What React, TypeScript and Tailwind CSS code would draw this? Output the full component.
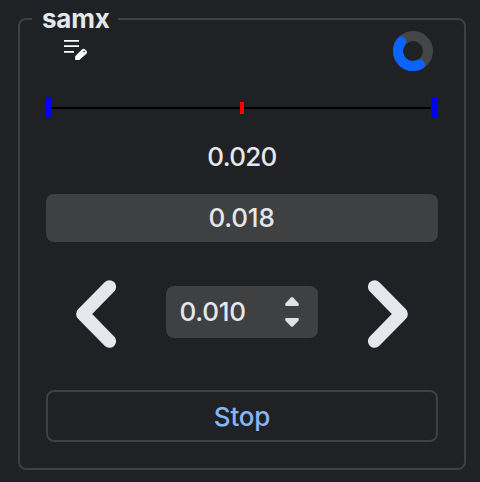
import React from "react";

function EditNoteIcon() {
  return (
    <svg width="26" height="26" viewBox="62 37 26 26" fill="#fff" aria-hidden="true">
      <path d="M64 40h15v1.700H64zM64 45.300h15v1.700H64zM64 51h10v1.700H64z" />
      <path
        fillRule="evenodd"
        d="M75.200 60v-3.700l6.700-6.700q1.600-1.500 3.200-.1l1.300 1.300q1.400 1.500 0 3L79.300 60zM84 50.500l-.9 1l1.100 1.100l1-.9z"
      />
    </svg>
  );
}

function Spinner() {
  return (
    <svg width="40" height="40" viewBox="-20 -20 40 40" fill="none" strokeWidth="10" aria-hidden="true">
      <circle r="15" stroke="#444546" />
      <path d="M-11.700 -9.400A15 15 0 0 0 7 13.270" stroke="#0a64ff" strokeLinecap="round" />
    </svg>
  );
}

function Chevron({ points }: { points: string }) {
  return (
    <svg width="40" height="68" viewBox="0 0 40 68" fill="none" stroke="#e4e7eb" strokeWidth="13.3" strokeLinecap="round" strokeLinejoin="round">
      <polyline points={points} />
    </svg>
  );
}

export default function App() {
  return (
    <main className="h-[482px] w-[480px] bg-[#202124] px-[18px] pt-[5px] pr-[14px] font-['Inter',sans-serif] text-[26px] leading-8 font-medium text-[#e4e7eb]">
      <fieldset className="h-[465px] rounded-lg border-2 border-[#3f4042] px-[26px]">
        <legend className="-ml-[14px] h-7 w-[86px] pl-[10px] text-[26px] leading-7 font-bold tracking-[-0.2px]">samx</legend>
        <div className="-mt-[2px] flex h-10 justify-between pr-[5px] pl-4">
          <div className="pt-[6px]"><EditNoteIcon /></div>
          <Spinner />
        </div>
        <div className="mt-[27px] flex h-5 items-center">
          <div className="h-5 w-[5px] bg-[#00f]" />
          <div className="h-[2px] w-[189px] bg-black" />
          <div className="h-3 w-1 bg-[#f00]" />
          <div className="h-[2px] flex-1 bg-black" />
          <div className="h-5 w-[7px] bg-[#00f]" />
        </div>
        <div className="mt-[23px] text-center tracking-[-0.7px]">0.020</div>
        <div className="mt-[21px] flex h-12 items-center justify-center rounded-lg bg-[#3f4042] pr-[1px] tracking-[-0.2px]">0.018</div>
        <div className="mt-[38px] flex h-[68px] items-center justify-between px-[30px]">
          <button><Chevron points="33.4,6.8 6.8,34 33.400,61.2" /></button>
          <div className="mb-[4px] flex h-[52px] w-[152px] items-center justify-between rounded-lg bg-[#3f4042] pr-[18px] pl-[14px]">
            <span className="-ml-[0.5px] tracking-[-0.3px]">0.010</span>
            <svg width="16" height="32" viewBox="0 0 16 32" fill="#e0e2e9" stroke="#e0e2e9" strokeWidth="2.4" strokeLinejoin="round">
              <path d="M8 2.200L13.600 8V8.700H2.400V8zM8 29.700L13.600 23.800V23.100H2.400V23.800z" />
            </svg>
          </div>
          <button><Chevron points="6.6,6.8 33.2,34 6.600,61.2" /></button>
        </div>
        <button className="mt-[42px] h-[52px] w-full rounded-lg border-2 border-[#3f4042] pt-[2px] tracking-[-0.2px] text-[#8ab4f8]">Stop</button>
      </fieldset>
    </main>
  );
}
